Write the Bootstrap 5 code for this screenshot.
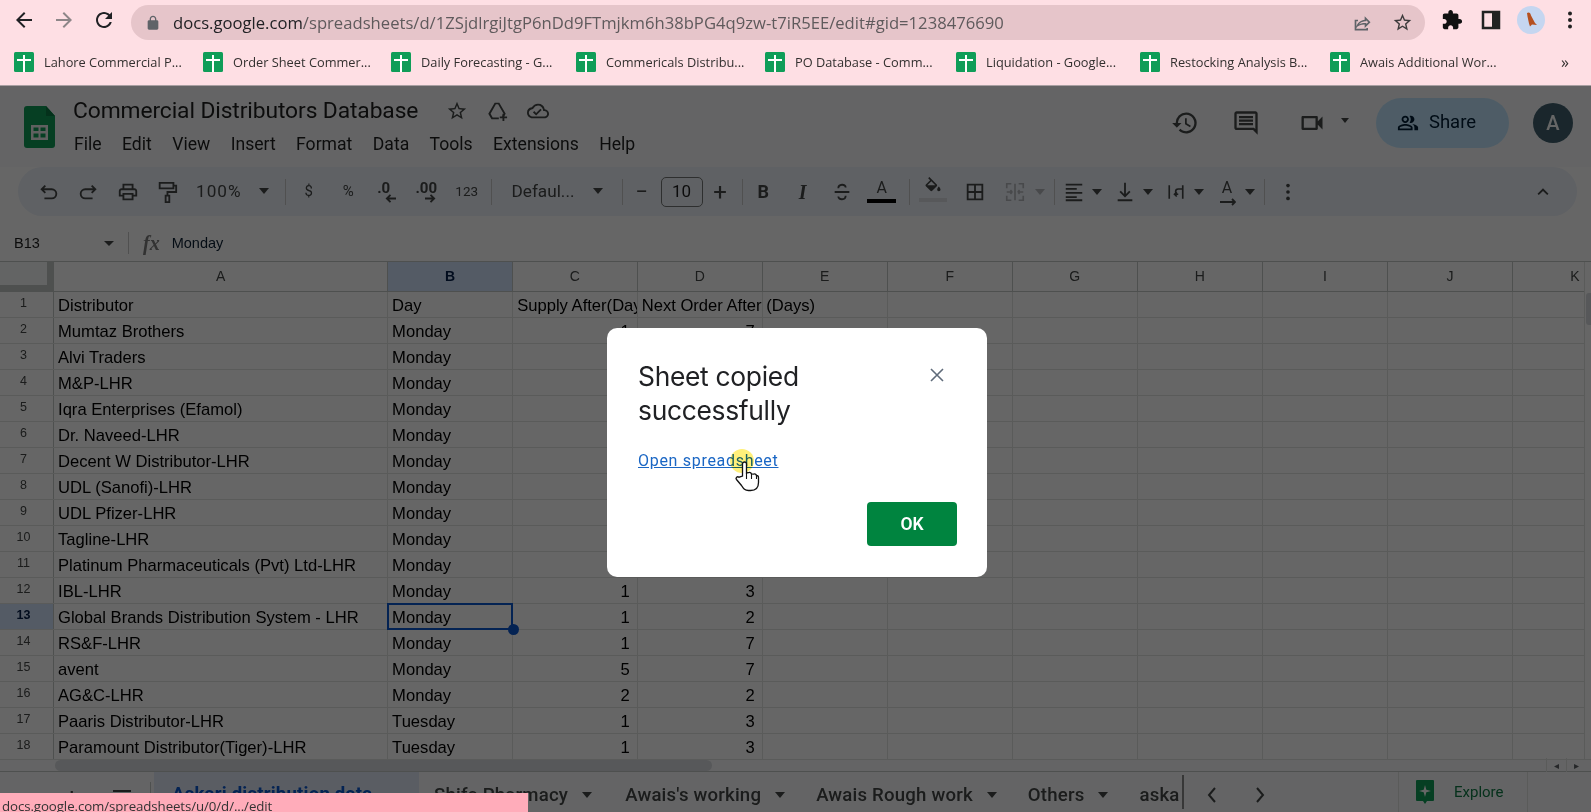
<!DOCTYPE html>
<html lang="en">
<head>
<meta charset="utf-8">
<title>Commercial Distributors Database</title>
<link href="https://cdn.jsdelivr.net/npm/bootstrap@5.3.0/dist/css/bootstrap.min.css" rel="stylesheet">
<style>
html,body{height:812px;overflow:hidden;margin:0;background:#fff;font-family:Roboto,"Liberation Sans",sans-serif;color:#000}
.chrome{height:86px;background:#fedfe4;border-bottom:1px solid #a99fa2;flex:none}
.c-top{height:40px;padding-left:4px}
.c-nav{width:40px;flex:none}
.c-nav svg{width:24px;height:24px}
.omni{margin-left:7px;width:1294px;height:35px;margin-top:5px;background:#e6c5ca;border-radius:18px;padding:0 12px 0 14px;color:#5f5a5c;font:16.65px "Open Sans",sans-serif;flex:none}
.omni b{font-weight:400;color:#202124}
.omni svg{width:16px;height:16px;margin-right:12px;fill:#5f6368;flex:none}
.c-right{width:166px;flex:none}
.c-right svg{flex:none}
.bm-row{height:44px;padding-left:14px;font:12.8px "Open Sans",sans-serif;color:#33302f}
.bm{width:20px;height:20px;margin-right:10px;flex:none}
.bm-item{white-space:nowrap}
.app{min-height:0;background:#fff}
.scrim{background:#000;opacity:.6;z-index:10}
.head{height:81px;flex:none;padding-left:24px;background:#f9fbfd}
.logo{width:31px;height:42px;margin-right:18px;margin-top:20px;flex:none}
.doc-title{font-size:22.8px;line-height:26px;margin-top:12px;letter-spacing:-.1px;color:#1f1f1f}
.doc-title svg{width:22px;height:22px;fill:#444746;margin-left:18px}
.menu{font-size:17.6px;gap:20.4px;margin-top:10px;margin-left:1px;line-height:20px;color:#1f1f1f}
.h-btn{width:40px}
.h-btn svg{width:28px;height:28px;fill:#444746}
.share{width:133px;height:50px;background:#c2e7ff;border-radius:25px;margin-left:24px;padding-right:12px;font-size:18.5px;font-weight:400;color:#001d35}
.share svg{width:22px;height:22px;margin-right:10px;fill:#001d35}
.avatar{width:40px;height:40px;border-radius:50%;background:#41606e;color:#fff;margin-left:24px;margin-right:18px;font-size:20px;font-weight:500}
.tools{height:49px;margin:0 14px 0 18px;background:#edf2fa;border-radius:25px;padding:0 14px 0 11px;flex:none;color:#444746;font-size:15.5px}
.ti{width:39.5px;height:40px;flex:none;padding:0;border:0;font-size:15px;color:#444746;line-height:1}
.ti svg{width:22px;height:22px;fill:#444746}
.sep{width:1px;height:26px;background:#c7c7c7;flex:none}
.caret{width:0;height:0;border:5.5px solid transparent;border-top:6px solid #444746;border-bottom:0;flex:none}
.z-block{width:98px;padding-left:9px;padding-right:16px;font-size:17.2px;letter-spacing:1px}
.f-block{width:130px;padding-left:20px;padding-right:19px;font-size:17.2px}
.size-box{width:42px;height:30px;border:1px solid #747775;border-radius:5px;font-size:17px;color:#1f1f1f;flex:none}
.b2{width:42px}
.grp{width:51px;flex:none}
.grp .ti{width:39px}
.grp .caret{margin-left:-2px}
.mg{width:58px;flex:none}
.fbar{height:46px;flex:none;background:#fff;border-bottom:1px solid #c4c7c5;font:14.5px "Liberation Sans",sans-serif;color:#0b1f33;padding-top:9px}
.nb{width:128px;padding-left:14px;padding-right:14px;color:#1f1f1f}
.fx{font:italic 20px "Liberation Serif",serif;margin:0 12px 0 14px;color:#7d7d7d;font-weight:700}
.grid-wrap{height:497px;flex:none;overflow:hidden}
table.sheet{table-layout:fixed;width:1638px;border-collapse:collapse;font:16.6px "Liberation Sans",sans-serif;color:#000}
table.sheet th,table.sheet td{border-right:1px solid #e1e3e1;border-bottom:1px solid #e1e3e1;padding:3px 4px 0;height:26px;white-space:nowrap;font-weight:400;line-height:22px}
table.sheet thead th{height:29px;text-align:center;font-size:14px;color:#444746;border-right-color:#c4c7c5;border-bottom:1px solid #c4c7c5;padding:0}
table.sheet tbody th{text-align:center;font-size:12.5px;color:#444746;border-right:1px solid #c4c7c5;padding:0 6px 3px 0;background:#fff}
table.sheet th.corner{background:#f8f9fa;box-shadow:inset -6px -6px 0 #c4c7c5}
th.sel-h{background:#d3e3fd!important;color:#041e49!important;font-weight:700!important}
td.num{text-align:right;padding-right:7px!important}
td.clip{overflow:hidden}
td.sel{position:relative}
td.sel::before{content:"";position:absolute;inset:-1px -1px -1px -1px;border:2px solid #0b57d0;pointer-events:none}
.dot{position:absolute;right:-7px;bottom:-6px;width:11px;height:11px;border-radius:50%;background:#0b57d0;z-index:2}
.v-thumb{right:0;top:31px;width:5px;height:32px;background:#dadce0;border-radius:3px 0 0 3px}
.hscroll{height:13px;flex:none;background:#f9fbfd;border-top:1px solid #e1e3e1;border-bottom:1px solid #c4c7c5;padding-left:55px}
.h-thumb{width:657px;height:11px;background:#dadce0;border-radius:6px}
.h-arrows{margin-left:auto;width:45px;color:#5f6368;font-size:10px}
.h-arrows span{width:20px;text-align:center;border-left:1px solid #e1e3e1}
.tabs{height:40px;flex:none;background:#f9fbfd;font-size:18.6px;letter-spacing:.2px;font-weight:500;color:#444746}
.t-add{width:151px;border-right:1px solid #c4c7c5;font-size:24px;font-weight:400;height:30px;align-self:flex-end}
.t-add span{margin-left:65px}
.t-ham{width:18px;height:2px;background:#444746;margin-left:34px;margin-top:-12px;box-shadow:0 5px 0 #444746,0 10px 0 #444746}
.t-active{width:265px;margin-left:3px;background:#e1e9f7;color:#0b57d0;padding:6px 0 0 18px;font-weight:700}
.tab{margin-left:31px;white-space:nowrap;padding-top:7px}
.tab .caret{margin-left:14px;border-width:5px;border-top-width:6px}
.expl{margin-left:auto;height:40px;border-left:1px solid #e1e3e1;border-right:1px solid #e1e3e1;width:130px;padding-left:17px;margin-right:63px;color:#0f7a45;font-size:15px;font-weight:400;letter-spacing:0}
.expl svg{width:18px;height:24px;margin-right:20px}
.status{left:0;bottom:0;width:528px;height:19px;background:#ffacba;z-index:30;font:13.3px "Open Sans",sans-serif;color:#333;padding:4px 0 0 2px;line-height:18px;overflow:hidden;letter-spacing:-.1px}
.dialog{left:607px;top:242px;width:380px;height:249px;z-index:20;padding:31px 30px 31px 31px;border-radius:10px}
.dialog h2{font:400 26.4px/34px Inter,sans-serif;color:#202124;letter-spacing:-.3px;margin:0;width:240px}
.x{right:42px;top:39px;width:16px;height:16px;background:none}
.x svg{display:block;width:16px;height:16px;stroke:#5f6b7a;stroke-width:1.6}
.lnk{font-size:16px;letter-spacing:.7px;color:#1a66c4;margin-top:24px;line-height:20px;display:inline-block}
.ok{width:90px;height:44px;background:#00843f;border:0;border-radius:4px;color:#fff;font-size:17.5px;font-weight:600;padding:0}
.hl{left:730px;top:363px;width:24px;height:24px;background:#fff07a;border-radius:50%;z-index:21;mix-blend-mode:multiply}
.hand{left:733px;top:374px;width:27px;height:32px;z-index:22}
</style>
</head>
<body class="d-flex flex-column position-relative">
<svg width="0" height="0" class="position-absolute">
  <symbol id="bm" viewBox="0 0 20 20"><rect width="20" height="20" rx="1.5" fill="#0f9d58"/><rect x="9" y="3" width="2" height="17" fill="#fff"/><rect x="3" y="7" width="14" height="2" fill="#fff"/></symbol>
</svg>
<div class="chrome">
  <div class="c-top d-flex">
    <div class="c-nav d-flex align-items-center justify-content-center"><svg viewBox="0 0 24 24" fill="#202124"><path d="M20 11H7.83l5.59-5.59L12 4l-8 8 8 8 1.41-1.41L7.83 13H20v-2z"/></svg></div>
    <div class="c-nav d-flex align-items-center justify-content-center"><svg viewBox="0 0 24 24" fill="#8d8688"><path d="M12 4l-1.41 1.41L16.17 11H4v2h12.17l-5.58 5.59L12 20l8-8z"/></svg></div>
    <div class="c-nav d-flex align-items-center justify-content-center"><svg viewBox="0 0 24 24" fill="#202124"><path d="M17.65 6.35C16.2 4.9 14.21 4 12 4c-4.42 0-7.99 3.58-7.99 8s3.57 8 7.99 8c3.73 0 6.84-2.55 7.73-6h-2.08c-.82 2.33-3.04 4-5.65 4-3.31 0-6-2.69-6-6s2.69-6 6-6c1.66 0 3.14.69 4.22 1.78L13 11h7V4l-2.35 2.35z"/></svg></div>
    <div class="omni d-flex align-items-center">
      <svg viewBox="0 0 24 24"><path d="M18 8h-1V6c0-2.76-2.24-5-5-5S7 3.24 7 6v2H6c-1.1 0-2 .9-2 2v10c0 1.1.9 2 2 2h12c1.1 0 2-.9 2-2V10c0-1.1-.9-2-2-2zM9 6c0-1.66 1.34-3 3-3s3 1.34 3 3v2H9V6z"/></svg>
      <span class="text-nowrap"><b>docs.google.com</b>/spreadsheets/d/1ZSjdlrgiJtgP6nDd9FTmjkm6h38bPG4q9zw-t7iR5EE/edit#gid=1238476690</span>
      <svg class="ms-auto" viewBox="0 0 24 24" style="width:20px;height:20px;margin-right:19px"><path d="M14 4v4C7 9 4 14 3 19c2.500-3.500 6-5.100 11-5.100V18l7-7-7-7zm2 4.800L18.200 11 16 13.200V12h-2c-2.800 0-5 .6-7 1.800C8.500 11.800 11 10.500 14.300 10L16 9.800v-1z"/><path d="M2 8v13h16v-3h-2v1H4V10h2V8z"/></svg>
      <svg viewBox="0 0 24 24" style="width:21px;height:21px;margin-right:0"><path d="M22 9.24l-7.19-.62L12 2 9.190 8.630 2 9.240l5.460 4.730L5.820 21 12 17.270 18.180 21l-1.630-7.030L22 9.240zM12 15.400l-3.760 2.270 1-4.280-3.320-2.880 4.380-.38L12 6.100l1.710 4.040 4.380.38-3.320 2.880 1 4.280L12 15.400z" fill="#3c3a3b"/></svg>
    </div>
    <div class="c-right d-flex align-items-center position-relative">
      <svg class="ms-3" width="22" height="22" viewBox="0 0 24 24" fill="#111"><path d="M20.500 11H19V7c0-1.100-.9-2-2-2h-4V3.500C13 2.120 11.880 1 10.500 1S8 2.120 8 3.500V5H4c-1.100 0-1.990.9-1.990 2v3.800H3.500c1.490 0 2.700 1.210 2.700 2.700s-1.210 2.700-2.700 2.700H2V20c0 1.100.9 2 2 2h3.800v-1.500c0-1.490 1.210-2.700 2.700-2.700 1.490 0 2.700 1.210 2.700 2.700V22H17c1.100 0 2-.9 2-2v-4h1.500c1.380 0 2.500-1.120 2.500-2.500S21.880 11 20.500 11z"/></svg>
      <svg style="margin-left:18px" width="20" height="20" viewBox="0 0 20 20"><path d="M2 2h16v16H2z" fill="none" stroke="#222" stroke-width="2.500"/><rect x="11" y="2" width="7" height="16" fill="#222"/></svg>
      <svg style="margin-left:16px" width="28" height="28" viewBox="0 0 28 28"><circle cx="14" cy="14" r="14" fill="#c5d6f0"/><path d="M10 7c2-1.500 3.500 0 4 2.500l4 7.500 2 2-5-.5-2 2-1-3-1.500-7z" fill="#b5501f"/></svg>
      <svg style="margin-left:22px" width="6" height="20" viewBox="0 0 6 20" fill="#222"><circle cx="3" cy="3.500" r="2"/><circle cx="3" cy="10" r="2"/><circle cx="3" cy="16.500" r="2"/></svg>
    </div>
  </div>
  <div class="bm-row d-flex align-items-center position-relative">
    <div class="bm-item d-flex align-items-center" style="width:189px"><svg class="bm"><use href="#bm"/></svg>Lahore Commercial P...</div>
    <div class="bm-item d-flex align-items-center" style="width:188px"><svg class="bm"><use href="#bm"/></svg>Order Sheet Commer...</div>
    <div class="bm-item d-flex align-items-center" style="width:185px"><svg class="bm"><use href="#bm"/></svg>Daily Forecasting - G...</div>
    <div class="bm-item d-flex align-items-center" style="width:189px"><svg class="bm"><use href="#bm"/></svg>Commericals Distribu...</div>
    <div class="bm-item d-flex align-items-center" style="width:191px"><svg class="bm"><use href="#bm"/></svg>PO Database - Comm...</div>
    <div class="bm-item d-flex align-items-center" style="width:184px"><svg class="bm"><use href="#bm"/></svg>Liquidation - Google...</div>
    <div class="bm-item d-flex align-items-center" style="width:190px"><svg class="bm"><use href="#bm"/></svg>Restocking Analysis B...</div>
    <div class="bm-item d-flex align-items-center" style="width:244px"><svg class="bm"><use href="#bm"/></svg>Awais Additional Wor...<span class="ms-auto" style="font-size:16px;margin-right:5px">»</span></div>
  </div>
</div>

<div class="app flex-grow-1 d-flex flex-column position-relative overflow-hidden">
  <div class="head d-flex">
    <svg class="logo" viewBox="0 0 31 42"><path d="M3 0h19l9 10v29a3 3 0 0 1-3 3H3a3 3 0 0 1-3-3V3a3 3 0 0 1 3-3z" fill="#0f9d58"/><path d="M22 0l9 10h-9z" fill="#0b7a44"/><path d="M7 19h17v15H7zm2.500 2.500v3.500h5v-3.500zm7 0v3.500h5v-3.500zm-7 6v4h5v-4zm7 0v4h5v-4z" fill="#f1f1f1" fill-rule="evenodd"/></svg>
    <div>
      <div class="doc-title d-flex align-items-center">Commercial Distributors Database
        <svg viewBox="0 0 24 24" style="margin-left:28px"><path d="M22 9.240l-7.190-.62L12 2 9.190 8.630 2 9.240l5.460 4.730L5.820 21 12 17.270 18.180 21l-1.630-7.030L22 9.240zM12 15.400l-3.760 2.270 1-4.280-3.320-2.880 4.380-.38L12 6.100l1.710 4.040 4.380.38-3.320 2.880 1 4.280L12 15.400z"/></svg>
        <svg viewBox="0 0 24 24"><path d="M9.500 3h5l7 12-2 3.400h-2.300l2-3.400-6-10.300h-2.400L5 15l2.300 4H14v2H6L2.500 15z"/><path d="M18 15v3h-3v2h3v3h2v-3h3v-2h-3v-3z"/></svg>
        <svg viewBox="0 0 24 24" style="margin-left:19px"><path d="M19.350 10.040A7.490 7.490 0 0 0 12 4C9.110 4 6.600 5.640 5.350 8.040A5.994 5.994 0 0 0 0 14c0 3.310 2.690 6 6 6h13c2.760 0 5-2.240 5-5 0-2.640-2.050-4.780-4.650-4.960zM19 18H6c-2.210 0-4-1.790-4-4 0-2.050 1.530-3.760 3.560-3.970l1.070-.11.5-.95A5.469 5.469 0 0 1 12 6c2.620 0 4.880 1.860 5.390 4.430l.3 1.500 1.530.11A2.980 2.980 0 0 1 22 15c0 1.650-1.350 3-3 3zm-9-3.820l-2.090-2.090L6.500 13.500 10 17l6.010-6.010-1.410-1.410z"/></svg>
      </div>
      <div class="menu d-flex"><span>File</span><span>Edit</span><span>View</span><span>Insert</span><span>Format</span><span>Data</span><span>Tools</span><span>Extensions</span><span>Help</span></div>
    </div>
    <div class="ms-auto d-flex align-items-center" style="margin-top:-7px">
      <div class="h-btn d-flex justify-content-center"><svg viewBox="0 0 24 24"><path d="M13 3a9 9 0 0 0-9 9H1l3.890 3.890.07.14L9 12H6a7 7 0 1 1 2.050 4.950L6.640 18.360A9 9 0 1 0 13 3zm-1 5v5l4.280 2.540.72-1.210-3.500-2.080V8H12z"/></svg></div>
      <div class="h-btn d-flex justify-content-center" style="margin-left:21px"><svg viewBox="0 0 24 24"><path d="M20 2H4c-1.100 0-2 .9-2 2v12c0 1.100.9 2 2 2h14l4 4V4c0-1.100-.9-2-2-2zm0 15.170L18.830 16H4V4h16v13.170zM6 12h12v2H6zm0-3h12v2H6zm0-3h12v2H6z"/></svg></div>
      <div class="h-btn d-flex justify-content-center" style="margin-left:26px"><svg viewBox="0 0 24 24"><path d="M15 8v8H5V8h10m1-2H4c-.55 0-1 .45-1 1v10c0 .55.45 1 1 1h12c.55 0 1-.45 1-1v-3.500l4 4v-11l-4 4V7c0-.55-.45-1-1-1z"/></svg></div>
      <span class="caret" style="margin-left:9px;margin-right:3px;margin-top:-6px;border-width:5px 4.500px 0"></span>
      <div class="share d-flex align-items-center justify-content-center"><svg viewBox="0 0 24 24"><path d="M16.670 13.130C18.040 14.060 19 15.320 19 17v3h4v-3c0-2.180-3.570-3.470-6.330-3.870zM15 12c2.210 0 4-1.790 4-4s-1.790-4-4-4c-.47 0-.91.1-1.330.24C14.500 5.270 15 6.580 15 8s-.5 2.730-1.330 3.760c.42.14.86.24 1.330.24zM9 12c2.210 0 4-1.790 4-4s-1.790-4-4-4-4 1.790-4 4 1.790 4 4 4zm0-6c1.100 0 2 .9 2 2s-.9 2-2 2-2-.9-2-2 .9-2 2-2zM9 13c-2.670 0-8 1.340-8 4v3h16v-3c0-2.660-5.330-4-8-4zm6 5H3v-.99C3.200 16.290 6.300 15 9 15s5.800 1.290 6 2v1z"/></svg>Share</div>
      <div class="avatar d-flex align-items-center justify-content-center">A</div>
    </div>
  </div>

  <div class="tools d-flex align-items-center">
    <button class="btn ti d-flex align-items-center justify-content-center"><svg viewBox="0 0 24 24"><path d="M8 5L4 9l4 4M4 9h11a5 5 0 0 1 0 10H7" fill="none" stroke="#444746" stroke-width="2"/></svg></button>
    <button class="btn ti d-flex align-items-center justify-content-center"><svg viewBox="0 0 24 24"><path d="M16 5l4 4-4 4M20 9H9a5 5 0 0 0 0 10h8" fill="none" stroke="#444746" stroke-width="2"/></svg></button>
    <button class="btn ti d-flex align-items-center justify-content-center"><svg viewBox="0 0 24 24"><path d="M19 8h-1V3H6v5H5c-1.660 0-3 1.340-3 3v6h4v4h12v-4h4v-6c0-1.660-1.340-3-3-3zM8 5h8v3H8V5zm8 14H8v-4h8v4zm2-4v-2H6v2H4v-4c0-.55.45-1 1-1h14c.55 0 1 .45 1 1v4h-2z"/></svg></button>
    <button class="btn ti d-flex align-items-center justify-content-center"><svg viewBox="0 0 24 24"><path d="M4 2h15v6H4zM19 5h3v7h-9.500v4M10.500 16h4v7h-4z" fill="none" stroke="#444746" stroke-width="2"/></svg></button>
    <div class="z-block d-flex align-items-center justify-content-between"><span>100%</span><span class="caret"></span></div>
    <span class="sep"></span>
    <button class="btn ti d-flex align-items-center justify-content-center" style="margin-left:3px">$</button>
    <button class="btn ti d-flex align-items-center justify-content-center">%</button>
    <button class="btn ti d-flex align-items-center justify-content-center position-relative"><span class="fw-bold" style="margin-top:-6px;margin-left:-8px">.0</span><svg viewBox="0 0 12 12" class="position-absolute" style="width:11px;height:11px;left:17px;top:21px"><path d="M6 2L2 6l4 4M2 6h10" fill="none" stroke="#444746" stroke-width="2"/></svg></button>
    <button class="btn ti d-flex align-items-center justify-content-center position-relative"><span class="fw-bold" style="margin-top:-6px;margin-left:-2px">.00</span><svg viewBox="0 0 12 12" class="position-absolute" style="width:11px;height:11px;left:17px;top:21px"><path d="M6 2l4 4-4 4M10 6H0" fill="none" stroke="#444746" stroke-width="2"/></svg></button>
    <button class="btn ti d-flex align-items-center justify-content-center" style="font-size:13.500px">123</button>
    <span class="sep" style="margin-left:4px"></span>
    <div class="f-block d-flex align-items-center justify-content-between"><span>Defaul...</span><span class="caret"></span></div>
    <span class="sep"></span>
    <button class="btn ti d-flex align-items-center justify-content-center" style="width:38px;font-size:22px">−</button>
    <div class="size-box d-flex align-items-center justify-content-center">10</div>
    <button class="btn ti d-flex align-items-center justify-content-center" style="width:35px;font-size:24px">+</button>
    <span class="sep" style="margin-left:4px;margin-right:1px"></span>
    <button class="btn ti d-flex align-items-center justify-content-center fw-bold" style="font-size:18px">B</button>
    <button class="btn ti d-flex align-items-center justify-content-center fst-italic fw-bold" style="font-size:20px;font-family:'Liberation Serif',serif">I</button>
    <button class="btn ti d-flex align-items-center justify-content-center"><svg viewBox="0 0 24 24"><path d="M4 12h16M8 8c0-5 8-5 8-1M16 16c0 5-8 5-8 1" fill="none" stroke="#444746" stroke-width="2"/></svg></button>
    <button class="btn ti d-flex flex-column align-items-center justify-content-center" style="font-size:16px">A<span class="d-block bg-black" style="width:29px;height:4px;margin-top:3px"></span></button>
    <span class="sep" style="margin-left:7px;margin-right:2px"></span>
    <button class="btn ti b2 d-flex flex-column align-items-center justify-content-center"><svg viewBox="0 0 24 24" style="height:20px;margin-top:-4px"><path d="M16.560 8.940L7.620 0 6.210 1.410l2.380 2.380-5.150 5.150c-.59.59-.59 1.540 0 2.120l5.500 5.500c.29.29.68.44 1.060.44s.77-.15 1.060-.44l5.500-5.500c.59-.58.59-1.530 0-2.120zM5.210 10L10 5.210 14.790 10H5.210zM19 11.500s-2 2.170-2 3.500c0 1.100.9 2 2 2s2-.9 2-2c0-1.330-2-3.500-2-3.500z"/></svg><span class="d-block" style="width:28px;height:4px;margin-top:1px;background:#dadce0"></span></button>
    <button class="btn ti b2 d-flex align-items-center justify-content-center"><svg viewBox="0 0 24 24"><path d="M3 3v18h18V3H3zm8 16H5v-6h6v6zm0-8H5V5h6v6zm8 8h-6v-6h6v6zm0-8h-6V5h6v6z"/></svg></button>
    <div class="mg d-flex align-items-center"><button class="btn ti d-flex align-items-center justify-content-center"><svg viewBox="0 0 24 24"><path d="M3 8V3h5M16 3h5v5M21 16v5h-5M8 21H3v-5M3 12h6m0 0l-2-2m2 2l-2 2M21 12h-6m0 0l2-2m-2 2l2 2M12 3v18" fill="none" stroke="#b4b7bb" stroke-width="1.800"/></svg></button><span class="caret" style="border-top-color:#b4b7bb"></span></div>
    <span class="sep"></span>
    <div class="grp d-flex align-items-center"><button class="btn ti d-flex align-items-center justify-content-center"><svg viewBox="0 0 24 24"><path d="M3 3h18v2H3zm0 4.500h12v2H3zM3 12h18v2H3zm0 4.500h12v2H3zM3 20h18v2H3z"/></svg></button><span class="caret"></span></div>
    <div class="grp d-flex align-items-center"><button class="btn ti d-flex align-items-center justify-content-center"><svg viewBox="0 0 24 24"><path d="M11 2h2v12.200l3.600-3.600L18 12l-6 6-6-6 1.400-1.400 3.600 3.600zM4 20h16v2H4z"/></svg></button><span class="caret"></span></div>
    <div class="grp d-flex align-items-center"><button class="btn ti d-flex align-items-center justify-content-center"><svg viewBox="0 0 24 24" style="width:18px;height:18px"><path d="M3 3v18M21 3v18M21 8h-6a3.500 3.500 0 0 0 0 7h-5m3-3l-3 3 3 3" fill="none" stroke="#444746" stroke-width="2.200"/></svg></button><span class="caret"></span></div>
    <div class="grp d-flex align-items-center"><button class="btn ti d-flex flex-column align-items-center justify-content-center position-relative" style="font-size:16px;padding-bottom:8px">A<svg viewBox="0 0 16 8" class="position-absolute" style="width:16px;height:8px;left:12px;top:26px"><path d="M0 4h15m-3-3l3 3-3 3" fill="none" stroke="#444746" stroke-width="1.800"/></svg></button><span class="caret"></span></div>
    <span class="sep" style="margin-left:5px;margin-right:4px"></span>
    <button class="btn ti d-flex align-items-center justify-content-center"><svg viewBox="0 0 24 24"><circle cx="12" cy="5" r="2"/><circle cx="12" cy="12" r="2"/><circle cx="12" cy="19" r="2"/></svg></button>
    <button class="btn ti ms-auto d-flex align-items-center justify-content-center"><svg viewBox="0 0 24 24"><path d="M7.400 15.400L12 10.800l4.600 4.600L18 14l-6-6-6 6z"/></svg></button>
  </div>

  <div class="fbar d-flex align-items-center">
    <div class="nb d-flex align-items-center justify-content-between"><span>B13</span><span class="caret" style="border-width:5px 5px 0"></span></div>
    <span class="sep" style="height:22px"></span>
    <span class="fx">fx</span><span>Monday</span>
  </div>

  <div class="grid-wrap position-relative">
    <table class="sheet">
      <colgroup><col style="width:53.500px"><col style="width:334px"><col style="width:125px"><col style="width:124.500px"><col style="width:125px"><col style="width:125px"><col style="width:125px"><col style="width:125px"><col style="width:125px"><col style="width:125px"><col style="width:125px"><col style="width:125px"></colgroup>
      <thead><tr><th class="corner"></th><th>A</th><th class="sel-h">B</th><th>C</th><th>D</th><th>E</th><th>F</th><th>G</th><th>H</th><th>I</th><th>J</th><th>K</th></tr></thead>
      <tbody>
        <tr><th>1</th><td>Distributor</td><td>Day</td><td class="clip">Supply After(Days)</td><td>Next Order After (Days)</td><td></td><td></td><td></td><td></td><td></td><td></td><td></td></tr>
        <tr><th>2</th><td>Mumtaz Brothers</td><td>Monday</td><td class="num">1</td><td class="num">7</td><td></td><td></td><td></td><td></td><td></td><td></td><td></td></tr>
        <tr><th>3</th><td>Alvi Traders</td><td>Monday</td><td class="num">1</td><td class="num">3</td><td></td><td></td><td></td><td></td><td></td><td></td><td></td></tr>
        <tr><th>4</th><td>M&amp;P-LHR</td><td>Monday</td><td class="num">1</td><td class="num">3</td><td></td><td></td><td></td><td></td><td></td><td></td><td></td></tr>
        <tr><th>5</th><td>Iqra Enterprises (Efamol)</td><td>Monday</td><td class="num">1</td><td class="num">3</td><td></td><td></td><td></td><td></td><td></td><td></td><td></td></tr>
        <tr><th>6</th><td>Dr. Naveed-LHR</td><td>Monday</td><td class="num">1</td><td class="num">3</td><td></td><td></td><td></td><td></td><td></td><td></td><td></td></tr>
        <tr><th>7</th><td>Decent W Distributor-LHR</td><td>Monday</td><td class="num">1</td><td class="num">3</td><td></td><td></td><td></td><td></td><td></td><td></td><td></td></tr>
        <tr><th>8</th><td>UDL (Sanofi)-LHR</td><td>Monday</td><td class="num">1</td><td class="num">3</td><td></td><td></td><td></td><td></td><td></td><td></td><td></td></tr>
        <tr><th>9</th><td>UDL Pfizer-LHR</td><td>Monday</td><td class="num">1</td><td class="num">3</td><td></td><td></td><td></td><td></td><td></td><td></td><td></td></tr>
        <tr><th>10</th><td>Tagline-LHR</td><td>Monday</td><td class="num">1</td><td class="num">3</td><td></td><td></td><td></td><td></td><td></td><td></td><td></td></tr>
        <tr><th>11</th><td>Platinum Pharmaceuticals (Pvt) Ltd-LHR</td><td>Monday</td><td class="num">1</td><td class="num">3</td><td></td><td></td><td></td><td></td><td></td><td></td><td></td></tr>
        <tr><th>12</th><td>IBL-LHR</td><td>Monday</td><td class="num">1</td><td class="num">3</td><td></td><td></td><td></td><td></td><td></td><td></td><td></td></tr>
        <tr><th class="sel-h">13</th><td>Global Brands Distribution System - LHR</td><td class="sel">Monday<span class="dot"></span></td><td class="num">1</td><td class="num">2</td><td></td><td></td><td></td><td></td><td></td><td></td><td></td></tr>
        <tr><th>14</th><td>RS&amp;F-LHR</td><td>Monday</td><td class="num">1</td><td class="num">7</td><td></td><td></td><td></td><td></td><td></td><td></td><td></td></tr>
        <tr><th>15</th><td>avent</td><td>Monday</td><td class="num">5</td><td class="num">7</td><td></td><td></td><td></td><td></td><td></td><td></td><td></td></tr>
        <tr><th>16</th><td>AG&amp;C-LHR</td><td>Monday</td><td class="num">2</td><td class="num">2</td><td></td><td></td><td></td><td></td><td></td><td></td><td></td></tr>
        <tr><th>17</th><td>Paaris Distributor-LHR</td><td>Tuesday</td><td class="num">1</td><td class="num">3</td><td></td><td></td><td></td><td></td><td></td><td></td><td></td></tr>
        <tr><th>18</th><td>Paramount Distributor(Tiger)-LHR</td><td>Tuesday</td><td class="num">1</td><td class="num">3</td><td></td><td></td><td></td><td></td><td></td><td></td><td></td></tr>
      </tbody>
    </table>
    <div class="position-absolute top-0 end-0 bottom-0 bg-white" style="width:7px;border-left:1px solid #e1e3e1"></div>
    <div class="v-thumb position-absolute"></div>
  </div>
  <div class="hscroll d-flex">
    <div class="h-thumb"></div>
    <div class="h-arrows d-flex align-items-center"><span>◂</span><span>▸</span></div>
  </div>
  <div class="tabs d-flex align-items-center">
    <div class="t-add d-flex align-items-center"><span>+</span><i class="t-ham"></i></div>
    <div class="t-active h-100 d-flex align-items-center text-nowrap">Askari distribution data</div>
    <div class="tab d-flex align-items-center" style="margin-left:15px">Shifa Pharmacy<span class="caret"></span></div>
    <div class="tab d-flex align-items-center" style="margin-left:33px">Awais's working<span class="caret"></span></div>
    <div class="tab d-flex align-items-center">Awais Rough work<span class="caret"></span></div>
    <div class="tab d-flex align-items-center">Others<span class="caret"></span></div>
    <div class="tab" style="border-right:2px solid #8a8a8a;padding-right:2px">aska</div>
    <svg style="margin-left:22px;margin-top:6px" width="12" height="18" viewBox="0 0 12 18"><path d="M9 2L3 9l6 7" fill="none" stroke="#444746" stroke-width="2"/></svg>
    <svg style="margin-left:36px;margin-top:6px" width="12" height="18" viewBox="0 0 12 18"><path d="M3 2l6 7-6 7" fill="none" stroke="#444746" stroke-width="2"/></svg>
    <div class="expl d-flex align-items-center"><svg viewBox="0 0 18 24"><path d="M1 0h16a1 1 0 0 1 1 1v19a1 1 0 0 1-1 1h-6l-2 3-2-3H1a1 1 0 0 1-1-1V1a1 1 0 0 1 1-1z" fill="#0f9d58"/><path d="M9 5l1.300 4.700L15 11l-4.700 1.300L9 17l-1.300-4.700L3 11l4.700-1.300z" fill="#fff"/></svg>Explore</div>
  </div>
  <div class="scrim position-absolute top-0 start-0 w-100 h-100"></div>

  <div class="dialog bg-white position-absolute">
    <h2>Sheet copied successfully</h2>
    <button class="x btn border-0 p-0 position-absolute" aria-label="Close"><svg viewBox="0 0 16 16"><path d="M2 2l12 12M14 2L2 14" fill="none"/></svg></button>
    <a href="#" class="lnk">Open spreadsheet</a>
    <div class="d-flex justify-content-end" style="margin-top:29px"><button class="btn ok">OK</button></div>
  </div>
  <div class="hl position-absolute"></div>
  <svg class="hand position-absolute" viewBox="0 0 26 32"><path d="M9 16V4a2 2 0 0 1 4 0v9l2-.3a2 2 0 0 1 3 1.300l2 .2a2 2 0 0 1 3 1.300c1.500 0 2 1 2 2v5c0 5-3 8-8 8h-2c-4 0-5-2-7-5l-5-6c-1.500-2 1-3.500 2.500-2.300z" fill="#fff" stroke="#111" stroke-width="1.300"/><path d="M13 13v6M18 14v5M23 15v4" stroke="#111" stroke-width="1.100" fill="none"/></svg>
</div>
<div class="status position-absolute">docs.google.com/spreadsheets/u/0/d/.../edit</div>
</body>
</html>
